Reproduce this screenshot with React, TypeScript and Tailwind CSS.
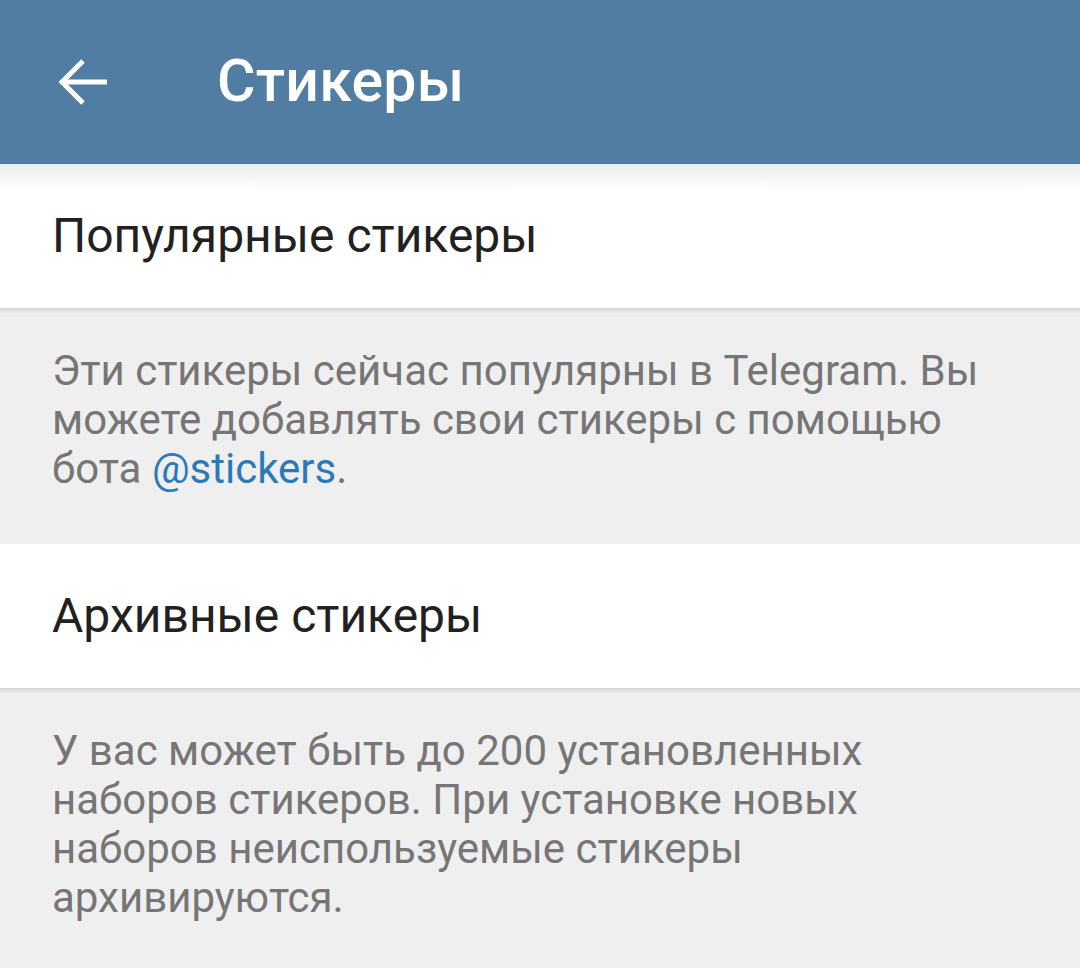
import React from 'react'

// back arrow drawn as stroke
const BackArrow = () => (
  <svg width="50" height="48" viewBox="0 0 50 48" fill="none" stroke="#ffffff" strokeWidth="5">
    <path d="M49 24 H5" />
    <path d="M25 3 L4 24 L25 45" />
  </svg>
)

const Header = () => (
  <div className="h-[164px] bg-[#517da2] flex items-center">
    <div className="w-[217px] pl-[58px] flex items-center">
      <BackArrow />
    </div>
    <h1 className="text-[59px] leading-[70px] font-medium text-white tracking-[0.2px] -mt-[3px]">Стикеры</h1>
  </div>
)

const Row = ({ title, top }: { title: string; top?: boolean }) => (
  <div
    className={
      top
        ? 'h-[144px] flex items-center px-[52px] bg-[linear-gradient(to_bottom,#eaeeea,#ffffff_26px)]'
        : 'h-[144px] flex items-center px-[52px] bg-white'
    }
  >
    <span className="text-[48px] text-[#212121]">{title}</span>
  </div>
)

const Info = ({ children, h }: { children: React.ReactNode; h: string }) => (
  <div className={`${h} bg-[linear-gradient(to_bottom,#d4d4d4,#efefef_6px)] px-[52px] pt-[38px]`}>
    <p className="text-[42px] leading-[49px] text-[#767676]">{children}</p>
  </div>
)

export default function App() {
  return (
    <div className="w-[1080px] h-[968px] overflow-hidden bg-[#efefef]" style={{ fontFamily: 'Roboto, "Noto Sans", sans-serif' }}>
      <Header />
      <Row title="Популярные стикеры" top />
      <Info h="h-[236px]">
        Эти стикеры сейчас популярны в Telegram. Вы можете добавлять свои стикеры с помощью бота{' '}
        <span className="text-[#2a7ab7]">@stickers</span>.
      </Info>
      <Row title="Архивные стикеры" />
      <Info h="h-[280px]">
        У вас может быть до 200 установленных наборов стикеров. При установке новых наборов неиспользуемые стикеры архивируются.
      </Info>
    </div>
  )
}
